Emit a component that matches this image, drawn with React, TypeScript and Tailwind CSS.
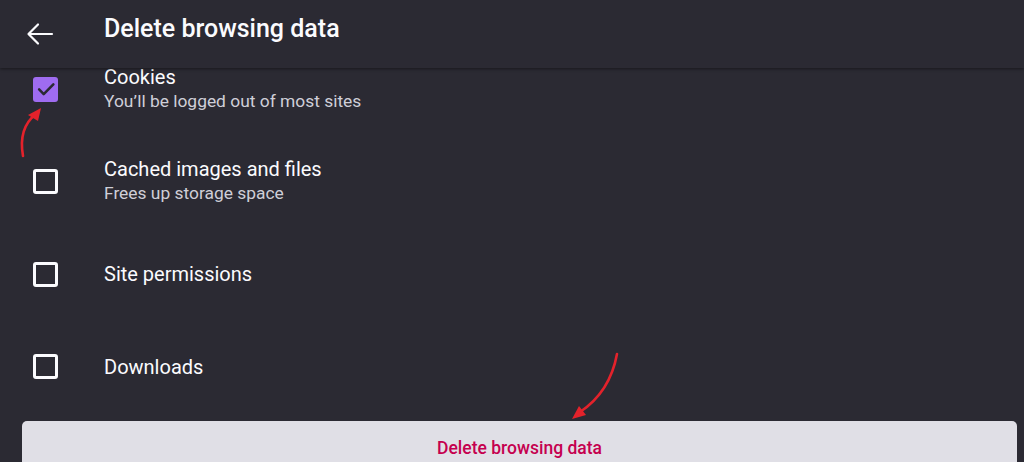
import React from "react";

function Box({ checked }: { checked?: boolean }) {
  if (checked) {
    return (
      <div className="w-[25px] h-[25px] rounded-[3px] bg-[#9f6cf0] flex items-center justify-center">
        <svg width="22" height="22" viewBox="0 0 24 24" fill="none">
          <path d="M4.5 12.5l5 5L20 7" stroke="#2b2a33" strokeWidth="2.8" strokeLinecap="round" strokeLinejoin="round" />
        </svg>
      </div>
    );
  }
  return <div className="w-[25px] h-[25px] rounded-[3px] border-[3px] border-[#fbfbfe]" />;
}

function Row({ title, sub, checked }: { title: string; sub?: string; checked?: boolean }) {
  return (
    <div className="h-[92.5px] flex items-center">
      <div className="w-[104px] pl-[33px] flex items-center">
        <Box checked={checked} />
      </div>
      <div className="flex flex-col">
        <div className="text-[20px] leading-[24px] text-[#fbfbfe]">{title}</div>
        {sub && <div className="text-[17.4px] leading-[25px] text-[#cfcfd8]">{sub}</div>}
      </div>
    </div>
  );
}

export default function App() {
  return (
    <div
      className="relative w-[1024px] h-[462px] overflow-hidden bg-[#2b2a33]"
      style={{ fontFamily: "Roboto, 'Noto Sans', sans-serif" }}
    >
      <div className="relative z-10 h-[68px] bg-[#2b2a33] flex items-center shadow-[0_1px_3px_rgba(0,0,0,0.45)]">
        <div className="w-[104px] pl-[26px] flex items-center">
          <svg width="28" height="24" viewBox="0 0 28 24" fill="none">
            <path d="M26 12H3M12 2.5L2.5 12l9.5 9.5" stroke="#fbfbfe" strokeWidth="2.2" strokeLinecap="round" strokeLinejoin="round" />
          </svg>
        </div>
        <div className="text-[25px] font-medium text-[#fbfbfe] mt-[-10px]">Delete browsing data</div>
      </div>
      <div className="mt-[-25px]">
        <Row title="Cookies" sub="You’ll be logged out of most sites" checked />
        <Row title="Cached images and files" sub="Frees up storage space" />
        <Row title="Site permissions" />
        <Row title="Downloads" />
        <div className="px-[22px] pr-[7px] pt-[8px]">
          <div className="h-[54px] rounded-[5px] bg-[#e0dfe6] flex items-center justify-center">
            <span className="text-[17.5px] font-medium text-[#c5004f]">Delete browsing data</span>
          </div>
        </div>
      </div>
      <svg className="absolute inset-0 z-20 pointer-events-none" width="1024" height="462" viewBox="0 0 1024 462" fill="none">
        <path d="M23 156 Q18 128 36 114" stroke="#e3222b" strokeWidth="2.6" strokeLinecap="round" />
        <path d="M41 108 L28 115 L38 121 Z" fill="#e3222b" />
        <path d="M617 354 Q610 392 580 412" stroke="#e3222b" strokeWidth="2.6" strokeLinecap="round" />
        <path d="M572 419 L586 415 L579 406 Z" fill="#e3222b" />
      </svg>
    </div>
  );
}
